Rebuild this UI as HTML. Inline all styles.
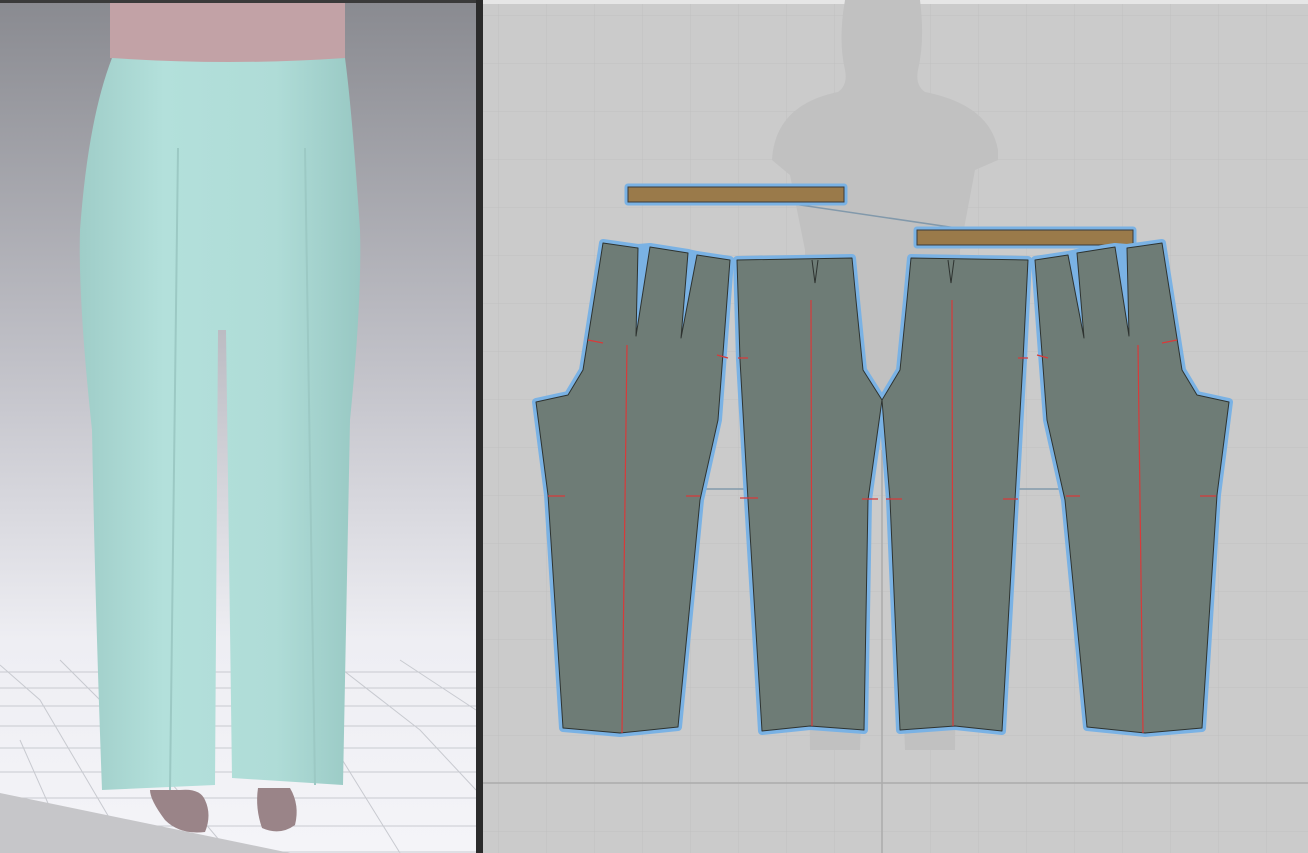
<!DOCTYPE html>
<html><head><style>
html,body{margin:0;padding:0;width:1308px;height:853px;overflow:hidden;background:#cbcbcb}
svg{display:block}
</style></head><body>
<svg width="1308" height="853" viewBox="0 0 1308 853" xmlns="http://www.w3.org/2000/svg">
<defs>
<linearGradient id="bg" x1="0" y1="0" x2="0" y2="1">
<stop offset="0" stop-color="#898a90"/><stop offset="0.45" stop-color="#c4c4cb"/><stop offset="0.75" stop-color="#eeeef3"/><stop offset="1" stop-color="#f4f4f8"/>
</linearGradient>
<linearGradient id="pant" x1="0" y1="0" x2="1" y2="0">
<stop offset="0" stop-color="#9fcdc8"/><stop offset="0.3" stop-color="#b3e0db"/><stop offset="0.7" stop-color="#afdcd7"/><stop offset="1" stop-color="#98c8c3"/>
</linearGradient>
<pattern id="grid" width="48" height="48" patternUnits="userSpaceOnUse" x="498" y="15">
<path d="M0 0V48M0 0H48" stroke="#c0c0c0" stroke-width="1" fill="none"/>
</pattern>
<polygon id="p1" points="603,243 638,248 636,336 650,247 688,253 681,338 697,255 730,260 718,420 700,500 678,727 620,733 563,728 548,495 536,402 568,395 583,370"/>
<polygon id="p2" points="737,260 852,258 856,300 863,370 882,400 868,500 864,730 810,726 762,731 748,500 740,360"/>
<polygon id="p3" points="911,258 1028,260 1023,360 1015,500 1002,731 955,726 900,730 890,500 882,400 900,370 907,300"/>
<polygon id="p4" points="1162,243 1127,248 1129,336 1115,247 1077,253 1084,338 1068,255 1035,260 1047,420 1065,500 1087,727 1145,733 1202,728 1217,495 1229,402 1197,395 1182,370"/>
</defs>
<rect x="0" y="0" width="476" height="853" fill="url(#bg)"/>
<rect x="0" y="0" width="476" height="3" fill="#3a3a3a"/>
<g stroke="#c8cad0" stroke-width="1" fill="none">
<path d="M0 672H476M0 688H476M0 706H476M0 726H476M0 748H476M0 772H476M0 798H476M0 826H476M0 852H476"/>
<path d="M0 665L40 700 130 853M60 660L110 710 230 853M250 660L330 740 400 853M330 660L420 730 476 790M400 660L476 710M20 740L70 853"/>
</g>
<polygon points="0,793 290,853 0,853" fill="#c6c6c9"/>
<path d="M110 3H345V58Q300 64 230 62Q160 64 110 58Z" fill="#c2a2a6"/>
<path d="M150 790Q150 800 165 820Q180 835 205 832Q212 815 205 800Q200 788 180 790Z" fill="#9a8488"/>
<path d="M258 788Q255 808 262 828Q280 836 295 825Q300 805 290 788Z" fill="#9a8488"/>
<path d="M112 58Q230 66 345 58Q352 110 360 230Q362 300 350 420L343 785L232 778L226 330L218 330L215 785L102 790Q95 600 92 430Q78 300 80 230Q88 120 112 58Z" fill="url(#pant)"/>
<path d="M178 148L170 790" stroke="#9cc9c4" stroke-width="2"/>
<path d="M305 148L315 785" stroke="#9cc9c4" stroke-width="2"/>
<rect x="476" y="0" width="7" height="853" fill="#2b2b2b"/>
<rect x="483" y="0" width="825" height="853" fill="#cbcbcb"/>
<rect x="483" y="0" width="825" height="4" fill="#e6e6e6"/>
<rect x="483" y="4" width="825" height="849" fill="url(#grid)"/>
<path d="M882 4V853M483 783H1308" stroke="#ababab" stroke-width="1.5"/>
<path d="M845 0H920Q925 40 918 70Q915 85 925 92Q990 105 998 150L998 160L975 170L960 250L955 750L905 750L895 450H870L860 750L810 750L805 250L790 175L772 160Q775 105 838 92Q848 85 845 70Q838 40 845 0Z" fill="#c1c1c1"/>
<path d="M780 202L970 230M700 489H750M1015 489H1065" stroke="#8299ab" stroke-width="1.5"/>
<g fill="#7ab2e4" stroke="#7ab2e4" stroke-width="7" stroke-linejoin="round">
<rect x="628" y="187" width="216" height="15"/>
<rect x="917" y="230" width="216" height="15"/>
</g>
<rect x="628" y="187" width="216" height="15" fill="#9a7a4a" stroke="#3a3a3a" stroke-width="1"/>
<rect x="917" y="230" width="216" height="15" fill="#9a7a4a" stroke="#3a3a3a" stroke-width="1"/>
<g fill="#7ab2e4" stroke="#7ab2e4" stroke-width="8" stroke-linejoin="round">
<use href="#p1"/><use href="#p2"/><use href="#p3"/><use href="#p4"/>
<polygon points="638,248 636,336 650,247"/><polygon points="688,253 681,338 697,255"/>
<polygon points="1127,248 1129,336 1115,247"/><polygon points="1077,253 1084,338 1068,255"/>
</g>
<g fill="#6e7c76" stroke="#2e3330" stroke-width="1" stroke-linejoin="round">
<use href="#p1"/><use href="#p2"/><use href="#p3"/><use href="#p4"/>
</g>
<g fill="none" stroke="#2e3330" stroke-width="1">
<path d="M812 260L815 283L818 260M948 260L951 283L954 260"/>
</g>
<g stroke="#d83a3a" stroke-width="1.2" fill="none">
<path d="M627 345L622 733M811 300L812 726M952 300L953 726M1138 345L1143 733"/>
<path d="M548 496H565M686 496H700M740 498H758M862 499H878M886 499H902M1003 499H1018M1066 496H1080M1200 496H1216"/>
<path d="M588 340L603 343M717 355L728 358M738 358L748 358M1018 358L1028 358M1037 355L1048 358M1162 343L1177 340"/>
</g>
</svg>
</body></html>
